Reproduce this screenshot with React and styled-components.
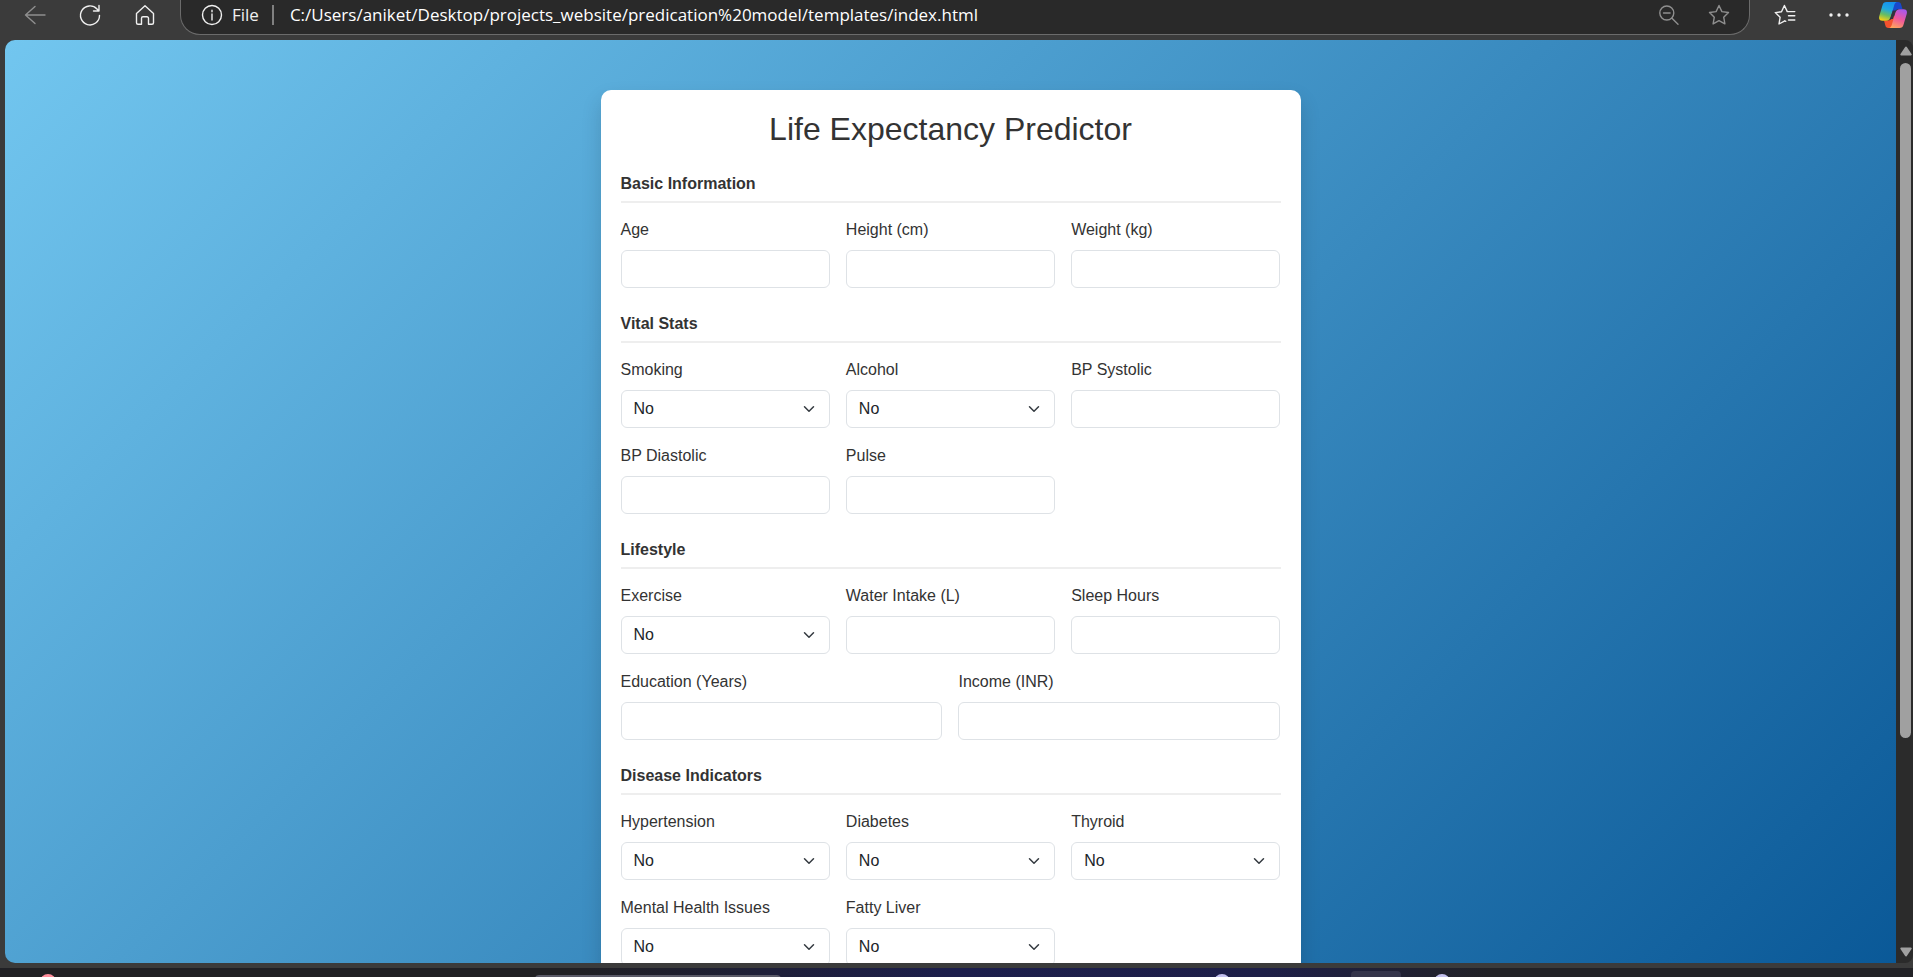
import React from "react"
import styled, { createGlobalStyle } from "styled-components"

const sections = [
  {
    title: "Basic Information",
    fields: [
      { name: "age", label: "Age" },
      { name: "height", label: "Height (cm)" },
      { name: "weight", label: "Weight (kg)" },
    ],
  },
  {
    title: "Vital Stats",
    fields: [
      { name: "smoking", label: "Smoking", choice: true },
      { name: "alcohol", label: "Alcohol", choice: true },
      { name: "systolic", label: "BP Systolic" },
      { name: "diastolic", label: "BP Diastolic" },
      { name: "pulse", label: "Pulse" },
    ],
  },
  {
    title: "Lifestyle",
    fields: [
      { name: "exercise", label: "Exercise", choice: true },
      { name: "water", label: "Water Intake (L)" },
      { name: "sleep", label: "Sleep Hours" },
      { name: "education", label: "Education (Years)", wide: true },
      { name: "income", label: "Income (INR)", wide: true },
    ],
  },
  {
    title: "Disease Indicators",
    fields: [
      { name: "hypertension", label: "Hypertension", choice: true },
      { name: "diabetes", label: "Diabetes", choice: true },
      { name: "thyroid", label: "Thyroid", choice: true },
      { name: "mental", label: "Mental Health Issues", choice: true },
      { name: "liver", label: "Fatty Liver", choice: true },
    ],
  },
]

function App() {
  return (
    <Window>
      <GlobalStyle />
      <Toolbar />
      <Frame>
        <Viewport>
          <Page>
            <Predictor />
          </Page>
        </Viewport>
        <Scrollbar />
      </Frame>
      <Taskbar />
    </Window>
  )
}

export default App

function Toolbar() {
  return (
    <Bar>
      <NavButtons>
        <IconButton aria-label="Back" dim>
          <Icon viewBox="0 0 24 24">
            <path d="M22 12H2.500M12 3.500 2.500 12l9.500 8.500" />
          </Icon>
        </IconButton>
        <IconButton aria-label="Refresh">
          <Icon viewBox="0 0 24 24">
            <path d="M21.500 12.500A9.500 9.500 0 1 1 19 6l1.800 2M21 2.500V8h-5.500" />
          </Icon>
        </IconButton>
        <IconButton aria-label="Home">
          <Icon viewBox="0 0 24 24">
            <path d="M3.500 10.500 12 2.800l8.500 7.700v9.300a1.500 1.500 0 0 1-1.500 1.500h-3.500v-6a1.500 1.500 0 0 0-1.500-1.500h-4a1.500 1.500 0 0 0-1.500 1.500v6H5a1.500 1.500 0 0 1-1.500-1.500z" />
          </Icon>
        </IconButton>
      </NavButtons>
      <AddressBar>
        <Icon viewBox="0 0 24 24">
          <circle cx="12" cy="12" r="9.500" />
          <path d="M12 11v6M12 7.200v1.600" />
        </Icon>
        <Scheme>File</Scheme>
        <Divider />
        <Address
          aria-label="Address"
          defaultValue="C:/Users/aniket/Desktop/projects_website/predication%20model/templates/index.html"
        />
        <AddressActions>
          <IconButton aria-label="Zoom out" dim>
            <Icon viewBox="0 0 24 24">
              <circle cx="9.800" cy="10" r="7" />
              <path d="m15 15.200 6 6M6.500 10h6.600" />
            </Icon>
          </IconButton>
          <IconButton aria-label="Add to favorites" dim>
            <Icon viewBox="0 0 24 24">
              <path d="m12 2.500 2.900 6.100 6.600.9-4.800 4.700 1.200 6.700-5.900-3.200-5.900 3.200 1.200-6.700-4.800-4.700 6.600-.9z" />
            </Icon>
          </IconButton>
        </AddressActions>
      </AddressBar>
      <MenuButtons>
        <IconButton aria-label="Favorites">
          <Icon viewBox="0 0 24 24">
            <path d="M14 8.600h7.800M15.500 12.800h6.300M15.500 17h6.300M11.800 17.800 6 21l1.100-6.700L2.300 9.600l6.200-.9L11.400 2.500l2.900 6.100M11.800 17.800l1 .5" />
          </Icon>
        </IconButton>
        <IconButton aria-label="Settings and more">
          <Icon viewBox="0 0 24 24" filled>
            <circle cx="5" cy="12" r="1.700" />
            <circle cx="13" cy="12" r="1.700" />
            <circle cx="21" cy="12" r="1.700" />
          </Icon>
        </IconButton>
        <IconButton aria-label="Copilot">
          <Copilot />
        </IconButton>
      </MenuButtons>
    </Bar>
  )
}

function Copilot() {
  return (
    <svg width="28" height="28" viewBox="0 0 28 28">
      <defs>
        <linearGradient id="left" x1="0.600" y1="0" x2="0.300" y2="1">
          <stop offset="0" stopColor="#1590f0" />
          <stop offset="0.400" stopColor="#20a8e0" />
          <stop offset="0.700" stopColor="#68bd62" />
          <stop offset="1" stopColor="#f4d016" />
        </linearGradient>
        <linearGradient id="right" x1="0.700" y1="0" x2="0.300" y2="1">
          <stop offset="0" stopColor="#a958ec" />
          <stop offset="0.500" stopColor="#f0589c" />
          <stop offset="1" stopColor="#ffa45c" />
        </linearGradient>
      </defs>
      <path d="M13 1h6c2 0 2.800 1 3.200 2.800L23.500 8H20c-2.500 0-4 1.500-4.600 4L12 13z" fill="#1848cc" />
      <path d="M15 27H9.500c-2 0-2.800-1-3.200-2.800L5 19.500h4c2.500 0 4-1.500 4.600-4L17 15z" fill="#f4522e" />
      <path
        d="M7.500 1h11c-2 0-2.800 1.300-3.300 3.200l-3.400 11.600c-.8 2.700-2.300 4-4.800 4H3.500c-3 0-4-2-3.200-4.800L3.500 4.200C4.100 2 5.300 1 7.500 1z"
        fill="url(#left)"
      />
      <path
        d="M20.500 27h-11c2 0 2.800-1.300 3.300-3.200l3.400-11.600c.8-2.700 2.300-4 4.800-4h3.500c3 0 4 2 3.200 4.800l-3.200 10.800c-.6 2.200-1.800 3.200-4 3.200z"
        fill="url(#right)"
      />
      <path d="M13.700 9.500h3.400c-.7.700-1.200 1.700-1.500 2.900l-1.600 5.600h-3.300c.6-.6.900-1.300 1.100-2.200z" fill="#33323c" />
    </svg>
  )
}

function Predictor() {
  return (
    <Card>
      <Title>Life Expectancy Predictor</Title>
      {sections.map(({ title, fields }) => (
        <Section key={title}>
          <Legend>{title}</Legend>
          <Fields>
            {fields.map((field) => (
              <Field key={field.name} {...field} />
            ))}
          </Fields>
        </Section>
      ))}
    </Card>
  )
}

function Field({ name, label, choice, wide }) {
  return (
    <Column wide={wide}>
      <Label htmlFor={name}>{label}</Label>
      {choice ? (
        <SelectBox>
          <Select id={name} name={name} defaultValue="No">
            <option>No</option>
            <option>Yes</option>
          </Select>
          <Chevron viewBox="0 0 16 16">
            <path d="m2 5 6 6 6-6" />
          </Chevron>
        </SelectBox>
      ) : (
        <Input id={name} name={name} type="number" />
      )}
    </Column>
  )
}

function Scrollbar() {
  return (
    <Track>
      <Arrow viewBox="0 0 12 10">
        <path d="M6 1.500 10.700 8.500H1.300z" />
      </Arrow>
      <Rail>
        <Thumb />
      </Rail>
      <Arrow viewBox="0 0 12 10">
        <path d="M6 8.500 10.700 1.500H1.300z" />
      </Arrow>
    </Track>
  )
}

// only the top edge of the desktop taskbar shows under the window
function Taskbar() {
  return (
    <Desktop>
      <TaskbarEdge>
        <circle cx="48" cy="14" r="8" fill="#ff8d9c" />
        <rect x="535" y="7" width="246" height="8" rx="4" fill="#5a5a68" />
        <circle cx="1222" cy="14" r="8" fill="#c3c0ee" />
        <rect x="1351" y="3" width="50" height="20" rx="4" fill="#34344a" />
        <circle cx="1442" cy="14" r="8" fill="#c3c0ee" />
      </TaskbarEdge>
    </Desktop>
  )
}

const GlobalStyle = createGlobalStyle`
  * {
    box-sizing: border-box;
  }
  body {
    margin: 0;
    background: #3b3b3b;
    color: #333;
    font: 16px/24px "Liberation Sans", Arial, sans-serif;
  }
  button, input, select {
    font: inherit;
  }
`

const Window = styled("div")`
  display: flex;
  flex-direction: column;
  height: 100vh;
  overflow: hidden;
`

const Bar = styled("header")`
  display: flex;
  align-items: flex-start;
  height: 40px;
  color: #f0f0f0;
  font-family: "Open Sans", "Noto Sans", sans-serif;
`

const NavButtons = styled("nav")`
  display: flex;
  gap: 31px;
  padding: 3px 23px;
`

const MenuButtons = styled(NavButtons)`
  gap: 29px;
  padding: 3px 6px 3px 23px;
`

const IconButton = styled("button").withConfig({
  shouldForwardProp: (prop) => prop !== "dim",
})`
  display: flex;
  align-items: center;
  height: 24px;
  padding: 0;
  border: 0;
  background: none;
  color: ${({ dim }) => (dim ? "#8f8f8f" : "#f0f0f0")};
`

const Icon = styled("svg").withConfig({
  shouldForwardProp: (prop) => prop !== "filled",
})`
  width: 24px;
  height: 24px;
  flex: none;
  fill: ${({ filled }) => (filled ? "currentColor" : "none")};
  stroke: ${({ filled }) => (filled ? "none" : "currentColor")};
  stroke-width: 1.4;
  stroke-linecap: round;
  stroke-linejoin: round;
`

const AddressBar = styled("div")`
  display: flex;
  flex: 1;
  align-items: center;
  height: 35px;
  padding: 0 18px 4px 19px;
  border: 1px solid #6b6b6b;
  border-top: 0;
  border-radius: 0 0 20px 20px;
  background: #292929;
`

const Scheme = styled("span")`
  margin-left: 8px;
  font-size: 17px;
`

const Divider = styled("span")`
  width: 2px;
  height: 20px;
  margin: 0 16px 0 13px;
  background: #808080;
`

const Address = styled("input")`
  flex: 1;
  min-width: 0;
  padding: 0;
  border: 0;
  background: none;
  color: #fff;
  font-size: 17px;
`

const AddressActions = styled("div")`
  display: flex;
  gap: 26px;
`

const Frame = styled("div")`
  display: flex;
  flex: 1;
  min-height: 0;
  padding-left: 5px;
`

const Viewport = styled("main")`
  flex: 1;
  overflow: hidden;
  border-radius: 10px 0 0 10px;
`

const Page = styled("div")`
  padding: 50px 0;
  background: linear-gradient(135deg, #72c6ef, #004e8f);
`

const Card = styled("form")`
  width: 100%;
  max-width: 700px;
  min-height: 1104px;
  margin: 0 auto;
  padding: 20px;
  border-radius: 10px;
  background: #fff;
  box-shadow: 0 10px 20px rgba(0, 0, 0, 0.15);
`

const Title = styled("h2")`
  margin: 0 0 24px;
  font-size: 32px;
  font-weight: 500;
  line-height: 38px;
  text-align: center;
`

const Section = styled("section")`
  margin-bottom: 24px;
`

const Legend = styled("h3")`
  margin: 0 0 15px;
  padding-bottom: 5px;
  border-bottom: 2px solid #eee;
  font-size: 16px;
  font-weight: bold;
`

const Fields = styled("div")`
  display: grid;
  grid-template-columns: repeat(6, 1fr);
  gap: 16px;
`

const Column = styled("div").withConfig({
  shouldForwardProp: (prop) => prop !== "wide",
})`
  grid-column: span ${({ wide }) => (wide ? 3 : 2)};
`

const Label = styled("label")`
  display: block;
  margin-bottom: 8px;
`

const Input = styled("input")`
  display: block;
  width: 100%;
  height: 38px;
  padding: 6px 12px;
  border: 1px solid #dee2e6;
  border-radius: 6px;
  background: #fff;
  color: #212529;
`

const SelectBox = styled("div")`
  display: grid;
  align-items: center;
  > * {
    grid-area: 1 / 1;
  }
`

const Select = styled(Input).attrs({ as: "select" })`
  appearance: none;
`

const Chevron = styled("svg")`
  width: 12px;
  height: 12px;
  margin-right: 15px;
  justify-self: end;
  pointer-events: none;
  fill: none;
  stroke: #343a40;
  stroke-width: 2;
  stroke-linecap: round;
  stroke-linejoin: round;
`

const Track = styled("div")`
  display: flex;
  flex-direction: column;
  align-items: center;
  width: 17px;
  padding: 6px 0 6px 2px;
  border-radius: 0 8px 8px 0;
  background: #2b2b2b;
`

const Arrow = styled("svg")`
  width: 12px;
  height: 10px;
  fill: #a0a0a0;
  stroke: #a0a0a0;
  stroke-width: 2;
  stroke-linejoin: round;
`

const Rail = styled("div")`
  flex: 1;
  margin: 7px 0;
`

const Thumb = styled("div")`
  width: 11px;
  height: 77%;
  border-radius: 6px;
  background: #a0a0a0;
`

const Desktop = styled("footer")`
  height: 14px;
  border-top: 5px solid #3b3b3b;
  background: linear-gradient(90deg, #202024 30%, #1c1e4c 50%, #1e1f48 66%, #222226 78%);
`

const TaskbarEdge = styled("svg")`
  display: block;
  width: 100%;
  height: 9px;
`
